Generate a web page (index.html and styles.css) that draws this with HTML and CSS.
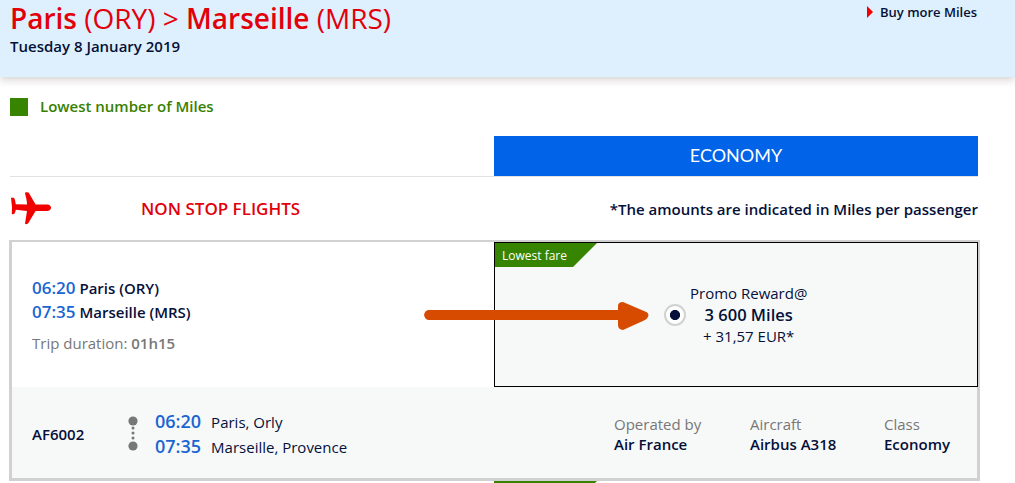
FILE: index.html
```html
<!DOCTYPE html>
<html lang="en">
<head>
    <meta charset="UTF-8">
    <meta name="viewport" content="width=device-width, initial-scale=1.0">
    <title>Paris - Marseille</title>
    <link rel="stylesheet" href="styles.css">
</head>
<body>
<header class="header">
    <div>
        <h1 class="route"><b>Paris</b> (ORY) &gt; <b>Marseille</b> (MRS)</h1>
        <p class="date">Tuesday 8 January 2019</p>
    </div>
    <a class="buy-miles"><span class="caret"></span>Buy more Miles</a>
</header>

<main class="content">
    <div class="legend"><span class="legend-box"></span>Lowest number of Miles</div>

    <div class="cabins">
        <div class="cabin"><span>ECONOMY</span></div>
    </div>

    <div class="flights-title">
        <svg class="plane" width="42" height="34" viewBox="0 0 42 34">
            <path d="M1 5.8 4 5.8 Q5.2 7.5 5.8 12.2 L17 12.4 C17 8 15.6 4 15 1 Q15 0 16.5 .2 L18.6 .4 L25.6 12.5 L37 12.4 Q41 12.8 41 15.5 Q41 18.6 37 19 L25.6 19 L18.2 31.3 Q16 33 15 31.8 L17 19 L5.8 17.8 Q5.4 20.5 4.2 22.1 L1.8 22.3 L2 15.3Z" fill="#f10000"/>
        </svg>
        <h2 class="non-stop">NON STOP FLIGHTS</h2>
        <p class="amounts">*The amounts are indicated in Miles per passenger</p>
    </div>

    <section class="flight">
        <div class="summary">
            <div class="times">
                <p><span class="time">06:20</span> Paris (ORY)</p>
                <p><span class="time">07:35</span> Marseille (MRS)</p>
                <p class="duration">Trip duration: <b>01h15</b></p>
            </div>
            <div class="fare">
                <span class="lowest">Lowest fare</span>
                <span class="radio"></span>
                <div class="price">
                    <p>Promo Reward@</p>
                    <p class="miles">3 600 Miles</p>
                    <p class="tax">+ 31,57 EUR*</p>
                </div>
            </div>
            <svg class="arrow" width="226" height="30" viewBox="0 0 226 30">
                <path d="M5 9H194V5Q194 1 199 1L220 10Q224 11 224.5 14Q224 17.5 220 19.5L199 29Q194 28.5 194 24V19H5Q1 19 0 14Q1 9 5 9Z" fill="#d64b00"/>
            </svg>
        </div>
        <div class="details">
            <span class="number">AF6002</span>
            <svg class="stops" width="10" height="36" viewBox="0 0 10 36" fill="#777">
                <circle cx="5" cy="5" r="4.6"/>
                <circle cx="5" cy="12" r="1.5"/>
                <circle cx="5" cy="17" r="1.5"/>
                <circle cx="5" cy="22" r="1.5"/>
                <circle cx="5" cy="30" r="4.6"/>
            </svg>
            <div class="legs">
                <p><span class="time">06:20</span>Paris, Orly</p>
                <p><span class="time">07:35</span>Marseille, Provence</p>
            </div>
            <dl class="info operator"><dt>Operated by</dt><dd>Air France</dd></dl>
            <dl class="info aircraft"><dt>Aircraft</dt><dd>Airbus A318</dd></dl>
            <dl class="info"><dt>Class</dt><dd>Economy</dd></dl>
        </div>
    </section>
    <div class="next-flight"><span class="next-lowest"></span></div>
</main>
</body>
</html>
```
FILE: styles.css
```css
*{
    box-sizing: border-box;
}
body{
    margin: 0;
    height: 483px;
    overflow: hidden;
    background: #fff;
    color: #051039;
    font-family: "Open Sans", sans-serif;
    font-size: 15px;
}
h1,h2,p,dl,dd{
    margin: 0;
}
b{
    font-weight: 600;
}
.header{
    display: flex;
    justify-content: space-between;
    height: 77px;
    padding: 0 38px 0 10px;
    background: #def0fd;
    box-shadow: 0 3px 8px rgba(60,30,40,.2);
}
.route{
    color: #e2000b;
    font-size: 28px;
    font-weight: 400;
    line-height: 36px;
}
.date{
    font-weight: 600;
    line-height: 21px;
}
.buy-miles{
    display: flex;
    align-items: center;
    height: 24px;
    font-size: 13px;
    font-weight: 600;
}
.caret{
    margin-right: 7px;
    border-left: 6px solid #f10000;
    border-top: 6px solid transparent;
    border-bottom: 6px solid transparent;
}
.content{
    width: 970px;
    margin-left: 10px;
    padding-top: 20px;
}
.legend{
    display: flex;
    align-items: center;
    height: 20px;
    padding-bottom: 2px;
    color: #378000;
    font-weight: 600;
    line-height: 18px;
}
.legend-box{
    width: 18px;
    height: 18px;
    margin: 2px 12px 0 0;
    background: #378400;
}
.cabins{
    display: flex;
    justify-content: flex-end;
    width: 968px;
    margin-top: 19px;
    border-bottom: 1px solid #e2e2e2;
}
.cabin{
    width: 484px;
    height: 40px;
    background: #0063e8;
    color: #fff;
    font-family: Lato, sans-serif;
    font-size: 18px;
    line-height: 38px;
    text-align: center;
}
.flights-title{
    display: flex;
    align-items: center;
    width: 968px;
    height: 63px;
}
.plane{
    margin-right: 89px;
}
.non-stop{
    color: #e2000b;
    font-size: 17px;
    font-weight: 600;
}
.amounts{
    margin-left: auto;
    font-weight: 600;
}
.flight{
    height: 241px;
    margin-left: -1px;
    border: 3px solid #d1d1d1;
    background: #f7f9f9;
}
.summary{
    position: relative;
    display: flex;
    height: 145px;
    margin-top: -1px;
}
.times{
    width: 482px;
    padding: 34px 0 0 20px;
    background: #fff;
    font-weight: 600;
    line-height: 23px;
}
.time{
    color: #1b65d2;
    font-size: 17px;
    font-weight: 600;
}
.duration{
    margin-top: 8px;
    color: #777;
    font-weight: 400;
}
.fare{
    position: relative;
    display: flex;
    align-items: center;
    width: 484px;
    height: 145px;
    margin-right: -1px;
    padding-left: 169px;
    border: 1px solid #000;
    background: #f7f9f9;
}
.lowest{
    position: absolute;
    left: 0;
    top: 0;
    width: 102px;
    height: 24px;
    padding-left: 7px;
    background: #378400;
    clip-path: polygon(0 0, 100% 0, 78px 100%, 0 100%);
    color: #fff;
    font-size: 12px;
    line-height: 25px;
}
.radio{
    width: 22px;
    height: 22px;
    margin-right: 4px;
    border: 2px solid #d1d1d1;
    border-radius: 50%;
    background: radial-gradient(circle, #051039 4.7px, #fff 5.4px);
}
.price{
    line-height: 22px;
    text-align: center;
}
.miles{
    font-size: 16.5px;
    font-weight: 600;
}
.tax{
    line-height: 21px;
}
.arrow{
    position: absolute;
    left: 412px;
    top: 59px;
}
.details{
    display: flex;
    align-items: center;
    height: 91px;
    padding: 3px 0 0 20px;
}
.number{
    width: 96px;
    font-weight: 600;
}
.stops{
    margin-right: 17px;
}
.legs{
    width: 459px;
    line-height: 24px;
}
.legs .time{
    margin-right: 10px;
    font-size: 18px;
}
.info{
    line-height: 20px;
}
.info dt{
    color: #777;
}
.info dd{
    font-weight: 600;
}
.operator{
    width: 136px;
}
.aircraft{
    width: 134px;
}
.next-flight{
    display: flex;
    padding-left: 484px;
}
.next-lowest{
    width: 103px;
    height: 24px;
    background: #378400;
    clip-path: polygon(0 0, 100% 0, 78px 100%, 0 100%);
}
```
